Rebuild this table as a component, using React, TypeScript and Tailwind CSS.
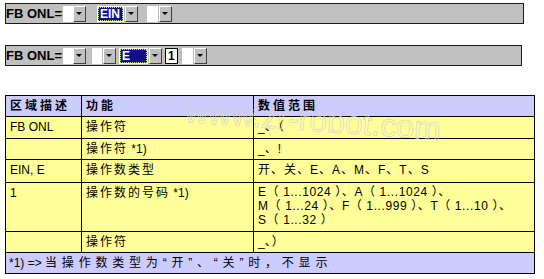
import React from 'react';

const font = "font-['Liberation_Sans','Noto_Sans_CJK_SC',sans-serif]";

function Arrow() {
  return <span className="block w-0 h-0 border-x-[3px] border-t-[3px] border-x-transparent border-t-black" />;
}

function DropButton({ className = '' }: { className?: string }) {
  return (
    <div
      className={`w-[13px] h-[16px] bg-[#c0c0c0] border border-t-white border-l-white border-b-[#404040] border-r-[#404040] flex items-center justify-center ${className}`}
    >
      <Arrow />
    </div>
  );
}

function Field({ className = '' }: { className?: string }) {
  return <div className={`h-[16px] bg-white ${className}`} />;
}

function Selected({ text, className = '' }: { text: string; className?: string }) {
  return (
    <div className={`h-[16px] bg-white p-[1px] ${className}`}>
      <div className="h-full bg-[#10108a] border border-dotted border-[#d8d890] text-white text-[12px] font-bold leading-[12px] pl-[1px]">
        {text}
      </div>
    </div>
  );
}

function Bar({ children, width }: { children: React.ReactNode; width: string }) {
  return (
    <div className={`ml-[5px] h-[21px] bg-[#c0c0c0] border border-[#1a1a1a] flex items-center ${width}`}>
      <span className="text-[13px] font-bold leading-none text-black">FB ONL=</span>
      {children}
    </div>
  );
}

function Cjk({ children, t = 'tracking-[2px]' }: { children: React.ReactNode; t?: string }) {
  return <span className={t}>{children}</span>;
}

export default function App() {
  const cell = 'border border-black align-top pt-[3px] pl-[4px] leading-[14px]';
  return (
    <div className={`w-[544px] h-[279px] bg-white text-black text-[12px] ${font}`}>
      <div className="pt-[3px]">
        <Bar width="w-[519px]">
          <Field className="w-[10px] ml-[1px]" />
          <DropButton />
          <Selected text="EIN" className="w-[27px] ml-[11px]" />
          <DropButton className="ml-[1px]" />
          <Field className="w-[11px] ml-[9px]" />
          <DropButton className="ml-[1px]" />
        </Bar>
      </div>
      <div className="pt-[21px]">
        <Bar width="w-[517px]">
          <Field className="w-[10px] ml-[1px]" />
          <DropButton />
          <Field className="w-[10px] ml-[6px]" />
          <DropButton className="ml-[1px]" />
          <Selected text="E" className="w-[29px] ml-[3px]" />
          <DropButton className="ml-[1px]" />
          <div className="w-[13px] h-[16px] ml-[3px] bg-white border border-black text-[12px] font-bold leading-[14px] pl-[2px]">1</div>
          <Field className="w-[11px] ml-[4px]" />
          <DropButton className="ml-[1px]" />
        </Bar>
      </div>

      <div className="relative ml-[5px] mt-[29px] w-[530px]">
        <table className="w-[530px] border-collapse table-fixed">
          <colgroup>
            <col className="w-[76px]" />
            <col className="w-[172px]" />
            <col />
          </colgroup>
          <tbody>
            <tr className="h-[21px] bg-[#ccccff] font-bold">
              <td className={cell}><Cjk t="tracking-[3px]">区域描述</Cjk></td>
              <td className={cell}><Cjk t="tracking-[3px]">功能</Cjk></td>
              <td className={cell}><Cjk t="tracking-[3px]">数值范围</Cjk></td>
            </tr>
            <tr className="h-[22px] bg-[#ffff99]">
              <td className={cell}>FB ONL</td>
              <td className={cell}><Cjk>操作符</Cjk></td>
              <td className={cell}>_<Cjk t="tracking-[1px]">、（</Cjk></td>
            </tr>
            <tr className="h-[21px] bg-[#ffff99]">
              <td className={cell}></td>
              <td className={cell}><Cjk>操作符</Cjk> *1)</td>
              <td className={cell}>_<Cjk t="tracking-[1px]">、!</Cjk></td>
            </tr>
            <tr className="h-[23px] bg-[#ffff99]">
              <td className={cell}>EIN, E</td>
              <td className={cell}><Cjk>操作数类型</Cjk></td>
              <td className={cell}><Cjk t="tracking-[1px]">开、关、E、A、M、F、T、S</Cjk></td>
            </tr>
            <tr className="h-[49px] bg-[#ffff99]">
              <td className={cell}>1</td>
              <td className={cell}><Cjk>操作数的号码</Cjk> *1)</td>
              <td className={`${cell} !pt-[2px] tracking-[0.6px]`}>
                E（ 1...1024 ）、A（ 1...1024 ）、
                <br />
                M（ 1...24 ）、F（ 1...999 ）、T（ 1...10 ）、
                <br />
                S（ 1...32 ）
              </td>
            </tr>
            <tr className="h-[21px] bg-[#ffff99]">
              <td className={cell}></td>
              <td className={cell}><Cjk>操作符</Cjk></td>
              <td className={cell}>_<Cjk t="tracking-[1px]">、）</Cjk></td>
            </tr>
            <tr className="h-[21px] bg-[#ccccff]">
              <td className={`${cell} !pl-[3px]`} colSpan={3}>
                *1) =&gt; <Cjk t="tracking-[4.8px]">当操作数类型为“开”、“关”时，不显示</Cjk>
              </td>
            </tr>
          </tbody>
        </table>
        <div className="absolute left-[180px] top-[9px] rotate-[4deg] text-[32px] leading-none font-['Liberation_Sans',sans-serif] text-transparent [-webkit-text-stroke:0.7px_#d4d4d4] pointer-events-none select-none whitespace-nowrap">
          www.zr-robot.com
        </div>
      </div>
    </div>
  );
}
